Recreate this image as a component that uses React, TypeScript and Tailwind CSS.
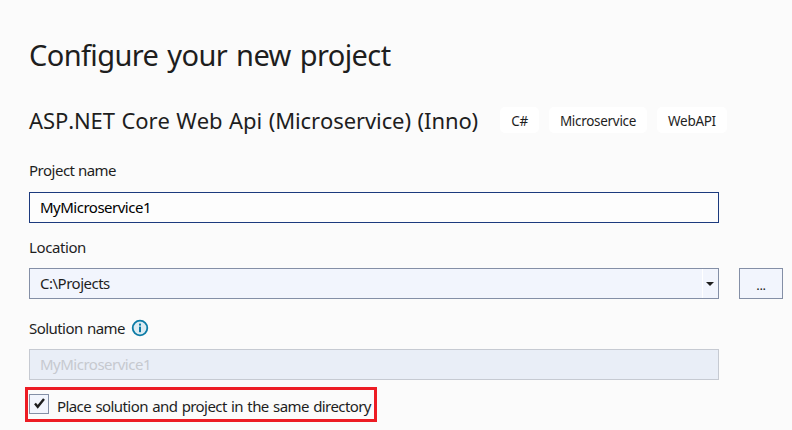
import React from "react";

function Tag({ children, className }: { children: React.ReactNode; className: string }) {
  return (
    <span className={`flex h-[26px] items-center justify-center rounded-[5px] bg-white pt-0.5 text-[13.5px] ${className}`}>
      <span className="whitespace-nowrap">{children}</span>
    </span>
  );
}

function Label({ children, className = "" }: { children: React.ReactNode; className?: string }) {
  return <label className={`block h-5 whitespace-nowrap leading-5 ${className}`}>{children}</label>;
}

function InfoIcon() {
  return (
    <svg width="18" height="18" viewBox="0 0 18 18" className="ml-[6px] shrink-0">
      <circle cx="9" cy="9" r="7.3" fill="#dcebf2" stroke="#0c7ba6" strokeWidth="1.8" />
      <rect x="8" y="4.6" width="2" height="2" fill="#0c7ba6" />
      <rect x="8" y="7.6" width="2" height="5.6" fill="#0c7ba6" />
    </svg>
  );
}

export default function App() {
  return (
    <main className="h-[430px] w-[792px] overflow-hidden bg-[#fbfbfb] pl-[29px] pt-[35px] font-['Noto_Sans',sans-serif] text-[15px] text-[#1e1e1e]">
      <h1 className="h-10 whitespace-nowrap text-[29px] leading-10 tracking-[-0.6px] [word-spacing:2px]">
        <span>Configure your new project</span>
      </h1>
      <div className="mt-8 flex h-[26px] items-center">
        <h2 className="w-[471px] whitespace-nowrap text-[22px] leading-[26px] tracking-[-0.1px] [font-kerning:none] [word-spacing:1px]">
          <span>ASP.NET Core Web Api (Microservice) (Inno)</span>
        </h2>
        <div className="flex gap-[10px]">
          <Tag className="w-[39px] tracking-[-0.4px]">C#</Tag>
          <Tag className="w-[98px] tracking-[-0.3px]">Microservice</Tag>
          <Tag className="w-[70px] tracking-[-0.3px]">WebAPI</Tag>
        </div>
      </div>

      <Label className="mt-[27px] tracking-[-0.5px]">Project name</Label>
      <div className="mt-3 flex h-[31px] w-[690px] items-center border border-[#1c3a7e] bg-[#fdfdfd] pl-[10px] text-black">
        <span className="tracking-[-0.5px]">MyMicroservice1</span>
      </div>

      <Label className="mt-[14px] tracking-[-0.4px]">Location</Label>
      <div className="mt-[11px] flex gap-5">
        <div className="flex h-[31px] w-[690px] items-center border border-[#848fa6] bg-[#f2f5fd] pl-[10px]">
          <span className="flex-1 tracking-[-0.5px]">C:\Projects</span>
          <span className="flex h-full w-4 items-center justify-center border-l border-white pr-px">
            <svg width="8" height="4" viewBox="0 0 8 4">
              <path d="M0 0H8L4 4Z" fill="#1e1e1e" />
            </svg>
          </span>
        </div>
        <button className="flex h-[31px] w-11 items-center justify-center border border-[#848fa6] bg-[#f2f5fd] pt-1">
          <span className="text-[13px] tracking-[-0.4px]">...</span>
        </button>
      </div>

      <div className="mt-[19px] flex h-5 items-center">
        <Label className="w-24 tracking-[-0.55px] [word-spacing:1px]">Solution name</Label>
        <InfoIcon />
      </div>
      <div className="mt-[11px] flex h-[31px] w-[690px] items-center border border-[#c6cad2] bg-[#e9eef7] pl-[10px] text-[#c6c9cf]">
        <span className="tracking-[-0.5px]">MyMicroservice1</span>
      </div>

      <div className="-ml-1 mt-[7px] flex h-[35px] w-[352px] border-[3px] border-[#ed1c24] pl-px">
        <span className="mt-1 flex h-5 w-5 shrink-0 items-center justify-center border border-[#848fa6] bg-[#f2f5fd]">
          <svg width="18" height="18" viewBox="0 0 18 18">
            <path d="M5 8.6L7.7 11.8L14 4" fill="none" stroke="#1e1e1e" strokeWidth="2.4" />
          </svg>
        </span>
        <Label className="ml-2 mt-[6px] tracking-[-0.58px] [word-spacing:1px]">Place solution and project in the same directory</Label>
      </div>
    </main>
  );
}
